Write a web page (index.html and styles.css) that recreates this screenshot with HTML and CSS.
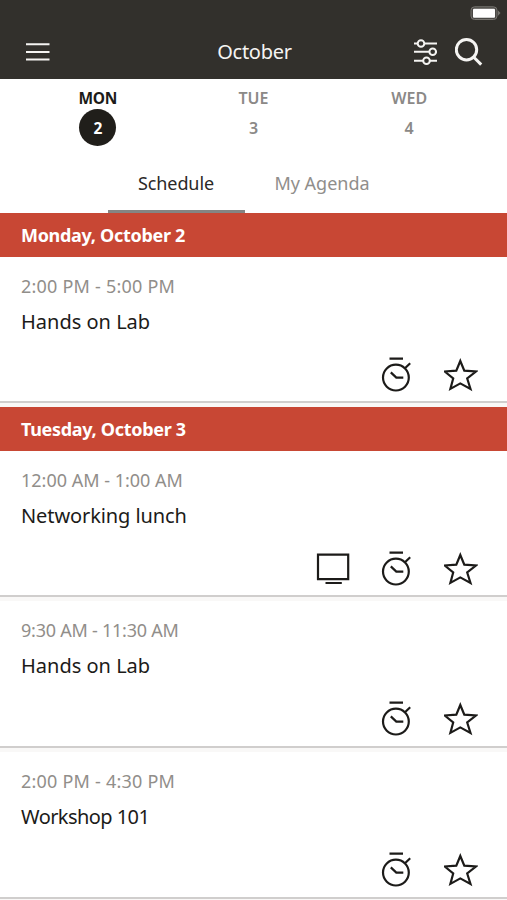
FILE: index.html
```html
<!DOCTYPE html>
<html lang="en">
<head>
<meta charset="utf-8">
<title>October</title>
<link rel="stylesheet" href="styles.css">
</head>
<body>
<svg class="defs" aria-hidden="true">
  <symbol id="timer" viewBox="0 0 34 38"><path d="M9.500 3.600h13.500M25.200 13l5-4.800M10.800 17.400l5.500 5.200h7"/><circle cx="15.900" cy="22.600" r="12.900"/></symbol>
  <symbol id="star" viewBox="0 0 34 38"><path d="M16.300 6l4 9.700 11.600.8-8.700 7 3.300 10.400-10.200-5.500-9.900 5.500 2.800-10.400-8.500-7 11.600-.8z"/></symbol>
  <symbol id="screen" viewBox="0 0 34 38"><path d="M2 5.600h30.200v24.600H2zM9.500 34h16.300"/></symbol>
</svg>
<header class="top">
  <div class="status">
    <svg width="32" height="16" viewBox="0 0 32 16"><rect x="1" y="1.800" width="26" height="12.700" rx="3.500" fill="#4a4845" stroke="#777570"/><rect x="3" y="3.700" width="22" height="9" rx="1" fill="#fff"/><path d="M28 5.500l2.500 2.600-2.500 2.600z" fill="#777570"/></svg>
  </div>
  <div class="bar">
    <svg class="menu" width="24" height="20" viewBox="0 0 24 20"><path d="M0 2.300h23.500M0 10h23.500M0 17.400h23.500"/></svg>
    <h1 class="title">October</h1>
    <div class="tools">
      <svg width="25" height="28" viewBox="0 0 25 28"><path d="M0 5.500h4M10.500 5.500H23M0 13.700h15M22 13.700h1M0 22.800h9M16 22.800h7"/><circle cx="7" cy="5.500" r="3.300"/><circle cx="18.700" cy="13.700" r="3.300"/><circle cx="12.500" cy="22.800" r="3.300"/></svg>
      <svg class="search" width="28" height="28" viewBox="0 0 28 28"><circle cx="11.500" cy="11.700" r="10.200"/><path d="M18.800 19.200l7.400 7.400"/></svg>
    </div>
  </div>
</header>
<nav class="days">
  <div class="day active"><span class="name">MON</span><span class="num">2</span></div>
  <div class="day"><span class="name">TUE</span><span class="num">3</span></div>
  <div class="day"><span class="name">WED</span><span class="num">4</span></div>
</nav>
<nav class="tabs">
  <div class="tab selected"><span>Schedule</span></div>
  <div class="tab agenda"><span>My Agenda</span></div>
</nav>
<main>
  <h2 class="date">Monday, October 2</h2>
  <article class="card">
    <p class="time pm">2:00 PM - 5:00 PM</p>
    <h3 class="event">Hands on Lab</h3>
    <div class="actions"><svg><use href="#timer"/></svg><svg><use href="#star"/></svg></div>
  </article>
  <h2 class="date">Tuesday, October 3</h2>
  <article class="card">
    <p class="time">12:00 AM - 1:00 AM</p>
    <h3 class="event lunch">Networking lunch</h3>
    <div class="actions"><svg><use href="#screen"/></svg><svg><use href="#timer"/></svg><svg><use href="#star"/></svg></div>
  </article>
  <article class="card">
    <p class="time morning">9:30 AM - 11:30 AM</p>
    <h3 class="event">Hands on Lab</h3>
    <div class="actions"><svg><use href="#timer"/></svg><svg><use href="#star"/></svg></div>
  </article>
  <article class="card">
    <p class="time pm">2:00 PM - 4:30 PM</p>
    <h3 class="event workshop">Workshop 101</h3>
    <div class="actions"><svg><use href="#timer"/></svg><svg><use href="#star"/></svg></div>
  </article>
</main>
</body>
</html>
```
FILE: styles.css
```css
* { box-sizing: border-box; margin: 0; padding: 0; }
html { overflow: hidden; }
body { width: 507px; height: 900px; overflow: hidden; background: #fff; color: #1c1b19; font-family: "Noto Sans", sans-serif; }
svg { display: block; flex: none; fill: none; }
.defs { display: none; }
.top { height: 79px; background: #32302c; color: #f5f4f2; }
.status { height: 25px; padding: 5px 5px 0 0; display: flex; justify-content: flex-end; }
.bar { height: 54px; padding: 0 24px 0 26px; display: grid; grid-template-columns: 1fr auto 1fr; align-items: center; }
.bar svg { stroke: #f5f4f2; stroke-width: 2; }
.title { font-size: 20px; line-height: 28px; font-weight: 400; letter-spacing: -0.25px; }
.tools { display: flex; justify-content: flex-end; align-items: center; gap: 16px; }
.bar .search { stroke-width: 3; }
.days { height: 75px; padding: 9px 20px 0; display: grid; grid-template-columns: repeat(3, 1fr); }
.day { display: flex; flex-direction: column; align-items: center; color: #8b8987; font-size: 16px; font-weight: 600; }
.day .name { line-height: 21px; }
.day .num { width: 37px; height: 37px; line-height: 39px; border-radius: 50%; text-align: center; }
.day.active { color: #1c1b19; font-size: 15.500px; font-weight: 700; }
.day.active .name { letter-spacing: -0.3px; }
.day.active .num { background: #201e1a; color: #fff; }
.tabs { height: 59px; display: flex; gap: 9px; padding-left: 107.500px; }
.tab { width: 137px; text-align: center; font-size: 18px; line-height: 58px; color: #908e8b; }
.tab.selected { color: #2b2927; border-bottom: 3px solid #858583; letter-spacing: -0.1px; }
.date { height: 44px; padding-left: 21px; background: #c84734; color: #fff; font-size: 18px; line-height: 45px; font-weight: 700; letter-spacing: -0.3px; }
.card { height: 151px; padding: 15px 29px 0 21px; border-bottom: 4px solid #f9f8f7; box-shadow: inset 0 -2px #d0cecd; }
.date + .card { height: 150px; }
.time { font-size: 18px; line-height: 28px; color: #918e8a; }
.time.pm { letter-spacing: 0.22px; }
.time.morning { letter-spacing: -0.24px; }
.event { font-size: 20px; line-height: 30px; margin-top: 7px; font-weight: 400; }
.event.lunch { letter-spacing: -0.1px; }
.event.workshop { letter-spacing: -0.57px; }
.actions { display: flex; justify-content: flex-end; gap: 30px; margin-top: 18px; }
.actions svg { width: 34px; height: 38px; stroke: #1c1b19; stroke-width: 2.200; }
```
